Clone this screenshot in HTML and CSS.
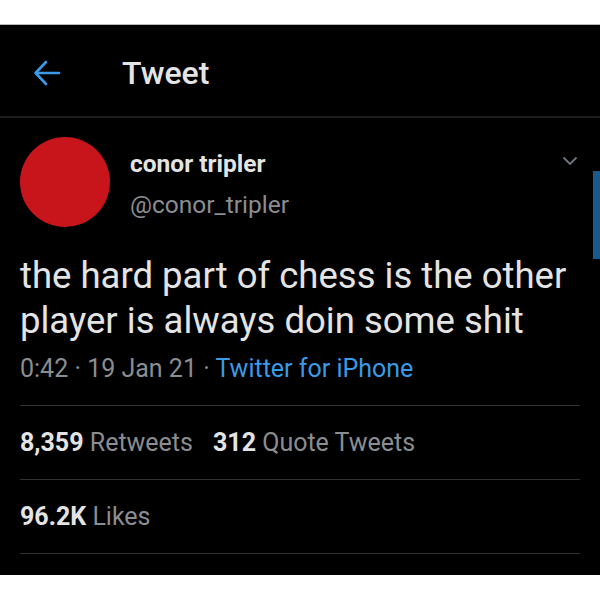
FILE: index.html
```html
<!DOCTYPE html>
<html lang="en">
<head>
  <meta charset="UTF-8" />
  <title>Tweet</title>
  <link rel="stylesheet" href="styles.css">
</head>
<body>
  <div class="screen">
    <div class="topbar">
      <svg class="back" width="28" height="26" viewBox="0 0 28 26">
        <path d="M26 13H3M13 2L2.5 13L13 24" fill="none" stroke="#3a9ae8" stroke-width="2.6" stroke-linecap="round" stroke-linejoin="round"/>
      </svg>
      <span class="title">Tweet</span>
    </div>

    <div class="tweet">
      <div class="author">
        <div class="avatar"></div>
        <div class="names">
          <div class="name">conor tripler</div>
          <div class="handle">@conor_tripler</div>
        </div>
        <svg class="chevron" width="16" height="10" viewBox="0 0 16 10">
          <path d="M1.5 1.5L8 8L14.5 1.5" fill="none" stroke="#6e767d" stroke-width="1.8"/>
        </svg>
      </div>

      <p class="text">the hard part of chess is the other player is always doin some shit</p>

      <div class="meta">0:42 · 19 Jan 21 · <span class="source">Twitter for iPhone</span></div>

      <div class="stats">
        <span><b>8,359</b> Retweets</span>
        <span><b>312</b> Quote Tweets</span>
      </div>
      <div class="stats">
        <span><b>96.2K</b> Likes</span>
      </div>
    </div>

    <div class="scrollbar"></div>
  </div>
</body>
</html>
```

FILE: styles.css
```css
body {
  margin: 0;
  padding: 24px 0 0;
  background-color: #ffffff;
  font-family: Roboto, "Liberation Sans", sans-serif;
}

.screen {
  position: relative;
  background-color: #000000;
  border-top: 1px solid #b8b8b8;
  height: 550px;
  overflow: hidden;
}

.topbar {
  display: flex;
  align-items: center;
  height: 91px;
  padding-left: 33px;
  border-bottom: 2px solid #1c1c1c;
}

.back {
  margin-top: 4px;
}

.title {
  margin-left: 61px;
  margin-top: 4px;
  color: #e4e4e4;
  font-size: 32px;
  font-weight: 500;
}

.tweet {
  padding: 0 20px;
}

.author {
  position: relative;
  display: flex;
  align-items: center;
  padding-top: 19px;
}

.avatar {
  width: 90px;
  height: 90px;
  border-radius: 50%;
  background-color: #c8151b;
}

.names {
  margin-left: 20px;
  padding-top: 4px;
}

.name {
  color: #e4e4e4;
  font-size: 24.5px;
  font-weight: 700;
  line-height: 41px;
}

.handle {
  color: #8a8d91;
  font-size: 24.5px;
  line-height: 41px;
}

.chevron {
  position: absolute;
  top: 38px;
  right: 2px;
}

.text {
  margin: 26px 0 0;
  color: #e4e4e4;
  font-size: 36.5px;
  line-height: 45px;
}

.meta {
  margin-top: 11px;
  padding-bottom: 21px;
  color: #8a8d91;
  font-size: 25px;
  line-height: 30px;
  border-bottom: 1px solid #333;
}

.source {
  color: #3a9ae8;
}

.stats {
  display: flex;
  gap: 20px;
  height: 73px;
  align-items: center;
  color: #8a8d91;
  font-size: 25px;
  border-bottom: 1px solid #333;
}

.stats b {
  color: #e4e4e4;
  font-weight: 700;
}

.scrollbar {
  position: absolute;
  top: 146px;
  right: 0;
  width: 7px;
  height: 88px;
  background-color: #1a5a8a;
}
```
